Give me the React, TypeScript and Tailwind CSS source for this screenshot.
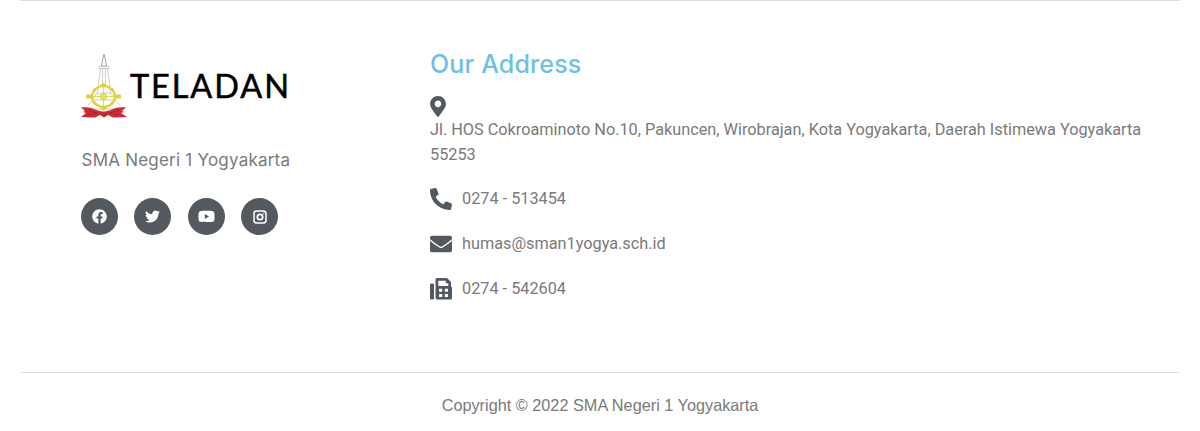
import React from "react";
import { FaMapMarkerAlt, FaPhoneAlt, FaEnvelope, FaFacebook, FaTwitter, FaYoutube } from "react-icons/fa";

function Fax({ className }: { className?: string }) {
  return (
    <svg className={className} viewBox="0 0 22 22" fill="currentColor">
      <rect x="0" y="5.500" width="4" height="16" rx="1.300" />
      <path fillRule="evenodd" d="M7 0h10l4 4v4.500q1 .4 1 1.500v10q0 1.500-1.500 1.500h-13Q5.500 21.500 5.500 20V1.500Q5.500 0 7 0zM8.300 2.700V8h10V5.200h-2.500V2.700zM9 10.800v3h3.200v-3zM14.800 10.800v3H18v-3zM9 16v3h3.200v-3zM14.800 16v3H18v-3z" />
    </svg>
  );
}

function Instagram({ className }: { className?: string }) {
  return (
    <svg className={className} viewBox="0 0 14 14" fill="none" stroke="currentColor">
      <rect x="1" y="1" width="12" height="12" rx="2.800" strokeWidth="1.500" />
      <circle cx="7" cy="7" r="2.700" strokeWidth="1.700" />
      <circle cx="10.600" cy="3.500" r=".5" strokeWidth=".7" />
    </svg>
  );
}

function Monument() {
  return (
    <svg className="block h-[66px] w-[46px] shrink-0" viewBox="0 0 46 66" fill="none">
      <g stroke="#c2c2c2" strokeWidth="0.8" fill="#fdfdfd">
        <path stroke="#8f8f8f" d="M23 1 21.500 7 20.500 13h5l-1-6z" />
        <path d="M18.500 13.500h9v2h-9zM19.500 15.500h7l4 30h-15z" />
        <path d="M21.500 16v16M24.500 16v16M11 47l5-7h14l5 7M7 52l5-5h22l5 5M5 56h36" />
      </g>
      <g stroke="#dbd62c" fill="none">
        <ellipse cx="22.500" cy="43.500" rx="11.500" ry="10.500" strokeWidth="2.200" />
        <path d="M22.500 31v26M6 43.500h34" strokeWidth=".8" />
        <circle cx="22.500" cy="43.500" r="2.600" strokeWidth="1.500" />
      </g>
      <g fill="#dbd62c">
        <path d="m19 32 3.500-2 3.500 2-3.500 3zM19 55l3.500-3 3.500 3-3.500 3z" />
        <rect x="5" y="41.500" width="5" height="4" rx="1.200" /><rect x="35" y="41.500" width="5" height="4" rx="1.200" />
        <circle cx="14" cy="36.500" r="1.500" /><circle cx="31" cy="36.500" r="1.500" />
        <circle cx="14" cy="50.500" r="1.500" /><circle cx="31" cy="50.500" r="1.500" />
      </g>
      <path fill="#d32937" d="M0 54.500c6-.8 11 .2 16 2.700l5 1.300h3l5-1.300c5-2.500 10-3.500 16-2.700l-4 3.500 2 1-3 1 6 4-14 .5-5-2.500-4 2.500-4-2.500-5 2.500L0 64l5-4-3-1 2-1z" />
      <path stroke="#8d2530" strokeWidth="0.7" d="m7 57 9 3-9 2M38 57l-9 3 9 2M19 59l4 4 4-4" />
    </svg>
  );
}

const socials = [
  { label: "Facebook", Icon: FaFacebook, size: "size-[15px]" },
  { label: "Twitter", Icon: FaTwitter, size: "size-[15px]" },
  { label: "YouTube", Icon: FaYoutube, size: "size-[17px]" },
  { label: "Instagram", Icon: Instagram, size: "size-[14px]" },
];

const contacts = [
  { text: "0274 - 513454", Icon: FaPhoneAlt },
  { text: "humas@sman1yogya.sch.id", Icon: FaEnvelope },
  { text: "0274 - 542604", Icon: Fax },
];

export default function App() {
  return (
    <footer className="h-[431px] bg-white px-5 font-['Roboto',sans-serif] text-[16.270px] text-[#7a7a7a]">
      <div className="flex h-[373px] border-y border-[#dedede] pl-[61px]">
        <section className="w-[349px] shrink-0 pt-[52px]">
          <div className="flex h-[66px]">
            <Monument />
            <span className="ml-[3px] mt-[13px] whitespace-nowrap font-['Lato',sans-serif] text-[32.500px] leading-[40px] tracking-[1.900px] text-black [-webkit-text-stroke:0.500px_black]">TELADAN</span>
          </div>
          <p className="mt-[29px] whitespace-nowrap pl-[0.500px] font-['Inter',sans-serif] text-[17px] leading-6 tracking-[0.220px]">SMA Negeri 1 Yogyakarta</p>
          <div className="mt-[26px] flex gap-[16.400px]">
            {socials.map(({ label, Icon, size }) => (
              <a key={label} aria-label={label} className="flex size-[37px] items-center justify-center rounded-full bg-[#54595f] text-white">
                <Icon className={size} />
              </a>
            ))}
          </div>
        </section>
        <section className="w-[720px] pt-[44px]">
          <h2 className="font-['Inter',sans-serif] text-[25px] font-medium leading-[38px] tracking-[0.150px] text-[#6ec1e4]">Our Address</h2>
          <FaMapMarkerAlt className="mt-[13px] block h-[21px] w-4 text-[#54595f]" />
          <p className="mt-px leading-[24.500px]">
            <span className="whitespace-nowrap">Jl. HOS Cokroaminoto No.10, Pakuncen, Wirobrajan, Kota Yogyakarta, Daerah Istimewa Yogyakarta</span>
            <br />55253
          </p>
          <ul className="mt-5 flex flex-col gap-5">
            {contacts.map(({ text, Icon }) => (
              <li key={text} className="flex h-[24.800px] items-center gap-[10px]">
                <Icon className="size-[22px] text-[#54595f]" />
                <span className="whitespace-nowrap">{text}</span>
              </li>
            ))}
          </ul>
        </section>
      </div>
      <p className="pt-5 text-center font-['Liberation_Sans',sans-serif] leading-6">Copyright © 2022 SMA Negeri 1 Yogyakarta</p>
    </footer>
  );
}
